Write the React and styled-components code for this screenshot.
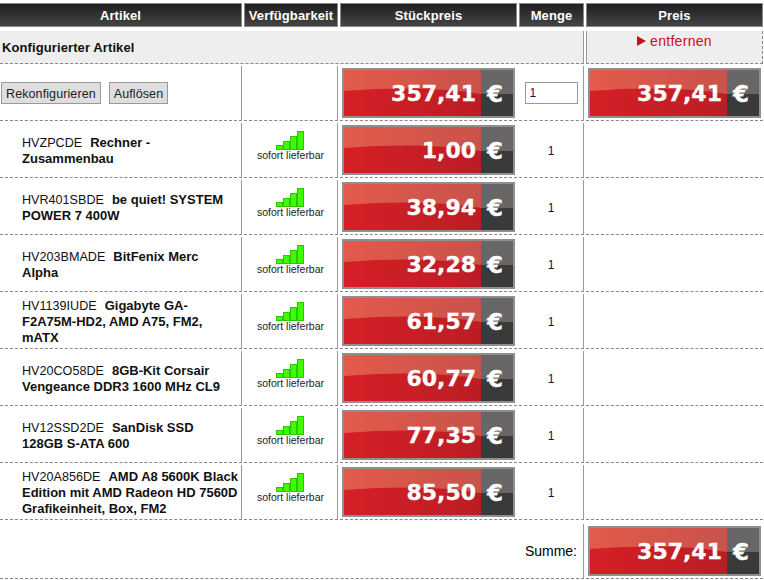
import React from "react";
import styled, { createGlobalStyle } from "styled-components";

const items = [
  { sku: "HVZPCDE", name: "Rechner -\nZusammenbau", price: "1,00" },
  { sku: "HVR401SBDE", name: "be quiet! SYSTEM\nPOWER 7 400W", price: "38,94" },
  { sku: "HV203BMADE", name: "BitFenix Merc\nAlpha", price: "32,28" },
  { sku: "HV1139IUDE", name: "Gigabyte GA-\nF2A75M-HD2, AMD A75, FM2,\nmATX", price: "61,57" },
  { sku: "HV20CO58DE", name: "8GB-Kit Corsair\nVengeance DDR3 1600 MHz CL9", price: "60,77" },
  { sku: "HV12SSD2DE", name: "SanDisk SSD\n128GB S-ATA 600", price: "77,35" },
  { sku: "HV20A856DE", name: "AMD A8 5600K Black\nEdition mit AMD Radeon HD 7560D\nGrafikeinheit, Box, FM2", price: "85,50" },
];

const GlobalStyle = createGlobalStyle`
  html, body {
    margin: 0;
    background: #fff;
  }
  body {
    font-family: "Liberation Sans", Arial, sans-serif;
    font-size: 12px;
    color: #111;
  }
`;

const Page = styled.div`
  width: 764px;
  height: 580px;
  overflow: hidden;
  padding-top: 3px;
  box-sizing: border-box;
`;

const Grid = styled.div`
  display: grid;
  grid-template-columns: 242px 94px 177px 65px 177px;
  column-gap: 2px;
  width: 763px;
`;

const HeaderCell = styled.div`
  height: 24px;
  box-sizing: border-box;
  border: 1px solid #8a8a8a;
  border-left-width: ${(p) => (p.$first ? 0 : 1)}px;
  background: linear-gradient(#1f1f1f, #454545);
  color: #fff;
  font-weight: bold;
  font-size: 13px;
  letter-spacing: 0.1px;
  display: flex;
  align-items: center;
  justify-content: center;
  margin-bottom: 4px;
`;

const SectionTitle = styled.div`
  grid-column: span 4;
  height: 33px;
  box-sizing: border-box;
  background: #eee;
  border-bottom: 1px dashed #888;
  border-right: 1px solid #999;
  font-weight: bold;
  padding: 9px 2px 0;
  font-size: 13px;
  letter-spacing: 0.1px;
  margin-bottom: 2px;
`;

const RemoveCell = styled.div`
  height: 33px;
  box-sizing: border-box;
  background: #eee;
  border-bottom: 1px dashed #888;
  border-right: 1px dashed #888;
  border-left: 1px solid #999;
  color: #c8101a;
  font-size: 14px;
  letter-spacing: 0.3px;
  display: flex;
  justify-content: center;
  align-items: flex-start;
  gap: 4px;
  padding-top: 2px;
  margin-bottom: 2px;
`;

const RemoveArrow = styled.span`
  width: 0;
  height: 0;
  margin-top: 3px;
  border-left: 9px solid #c8101a;
  border-top: 5px solid transparent;
  border-bottom: 5px solid transparent;
`;

const Cell = styled.div`
  height: 55px;
  box-sizing: border-box;
  border-bottom: 1px dashed #888;
  margin-top: ${(p) => (p.$last ? 2 : 0)}px;
  margin-bottom: 2px;
  display: flex;
  align-items: center;
  justify-content: ${(p) => p.$justify || "flex-start"};
  border-right: ${(p) => (p.$divider ? "1px solid #999" : "0")};
`;

const ButtonRow = styled.div`
  display: flex;
  gap: 8px;
  padding-left: 1px;
`;

const ActionButton = styled.button`
  height: 22px;
  padding: 1px 4px 0;
  background: #dedede;
  border: 1px solid #999;
  border-radius: 0;
  font-family: "Liberation Sans", Arial, sans-serif;
  font-size: 12.5px;
  letter-spacing: 0.1px;
  color: #222;
`;

const ArticleText = styled.div`
  padding: 2px 0 0 22px;
  line-height: 16px;
  font-weight: bold;
  font-size: 13px;
  white-space: pre-line;
`;

const Sku = styled.span`
  font-weight: normal;
  font-size: 12.6px;
  margin-right: 8px;
`;

const Stock = styled.div`
  display: flex;
  flex-direction: column;
  align-items: center;
  margin-bottom: 9px;
  font-size: 10.5px;
  line-height: 10px;
  color: #222;
`;

const SignalIcon = () => (
  <svg width="29" height="19" viewBox="0 0 29 19">
    <g fill="#3cff00" stroke="#2fc400" strokeWidth="1">
      <rect x="0.5" y="14.5" width="6" height="4" />
      <rect x="7.5" y="10.5" width="6" height="8" />
      <rect x="14.5" y="5.5" width="6" height="13" />
      <rect x="21.5" y="0.5" width="6" height="18" />
    </g>
  </svg>
);

const Box = styled.div`
  position: relative;
  width: 173px;
  height: 50px;
  box-sizing: border-box;
  border: 2px solid #8f8f8f;
  display: grid;
  grid-template-columns: 1fr 32px;
  background: linear-gradient(90deg, #d61f26, #b51d24);
  color: #fff;
  font-family: "DejaVu Sans", Verdana, sans-serif;
  font-weight: bold;
  font-size: 22px;
  -webkit-text-stroke: 0.3px #fff;
`;

const Gloss = styled.svg`
  position: absolute;
  left: 0;
  top: 0;
  width: 100%;
  height: 100%;
`;

const Amount = styled.span`
  position: relative;
  text-align: right;
  line-height: 48px;
  padding-right: 5px;
`;

const Currency = styled.span`
  position: relative;
  text-align: center;
  line-height: 48px;
  font-size: 23px;
  padding-right: 4px;
`;

const PriceBox = ({ value }) => (
  <Box>
    <Gloss viewBox="0 0 169 46" preserveAspectRatio="none">
      <defs>
        <linearGradient id="glossFill" x1="0" x2="1" y1="0" y2="0">
          <stop offset="0" stopColor="#e35a4b" />
          <stop offset="1" stopColor="#c9534b" />
        </linearGradient>
      </defs>
      <path d="M0 0H137V24C110 19 60 16 0 21Z" fill="url(#glossFill)" />
      <rect x="137" y="0" width="32" height="24" fill="#686666" />
      <rect x="137" y="24" width="32" height="22" fill="#3a3a3a" />
    </Gloss>
    <Amount>{value}</Amount>
    <Currency>€</Currency>
  </Box>
);

const QtyInput = styled.input`
  width: 53px;
  height: 22px;
  box-sizing: border-box;
  border: 1px solid #999;
  padding: 0 4px;
  font-family: "Liberation Sans", Arial, sans-serif;
  font-size: 12px;
  color: #2a0a55;
`;

const Qty = styled.span`
  color: #2a0a55;
  padding-top: 2px;
`;

const SumLabel = styled.div`
  grid-column: span 4;
  height: 55px;
  box-sizing: border-box;
  margin-top: 2px;
  border-bottom: 1px dashed #888;
  border-right: 1px solid #999;
  display: flex;
  align-items: center;
  justify-content: flex-end;
  padding-right: 6px;
  font-size: 14px;
  color: #000;
`;

const App = () => (
  <Page>
    <GlobalStyle />
    <Grid>
      <HeaderCell $first>Artikel</HeaderCell>
      <HeaderCell>Verfügbarkeit</HeaderCell>
      <HeaderCell>Stückpreis</HeaderCell>
      <HeaderCell>Menge</HeaderCell>
      <HeaderCell>Preis</HeaderCell>

      <SectionTitle>Konfigurierter Artikel</SectionTitle>
      <RemoveCell>
        <RemoveArrow />
        entfernen
      </RemoveCell>

      <Cell $divider>
        <ButtonRow>
          <ActionButton>Rekonfigurieren</ActionButton>
          <ActionButton>Auflösen</ActionButton>
        </ButtonRow>
      </Cell>
      <Cell $divider />
      <Cell $justify="center">
        <PriceBox value="357,41" />
      </Cell>
      <Cell $justify="center" $divider>
        <QtyInput defaultValue="1" />
      </Cell>
      <Cell $justify="center">
        <PriceBox value="357,41" />
      </Cell>

      {items.map((item) => (
        <React.Fragment key={item.sku}>
          <Cell $divider>
            <ArticleText>
              <Sku>{item.sku}</Sku>
              {item.name}
            </ArticleText>
          </Cell>
          <Cell $divider $justify="center">
            <Stock>
              <SignalIcon />
              sofort lieferbar
            </Stock>
          </Cell>
          <Cell $justify="center">
            <PriceBox value={item.price} />
          </Cell>
          <Cell $justify="center" $divider>
            <Qty>1</Qty>
          </Cell>
          <Cell />
        </React.Fragment>
      ))}

      <SumLabel>Summe:</SumLabel>
      <Cell $last $justify="center">
        <PriceBox value="357,41" />
      </Cell>
    </Grid>
  </Page>
);

export default App;
